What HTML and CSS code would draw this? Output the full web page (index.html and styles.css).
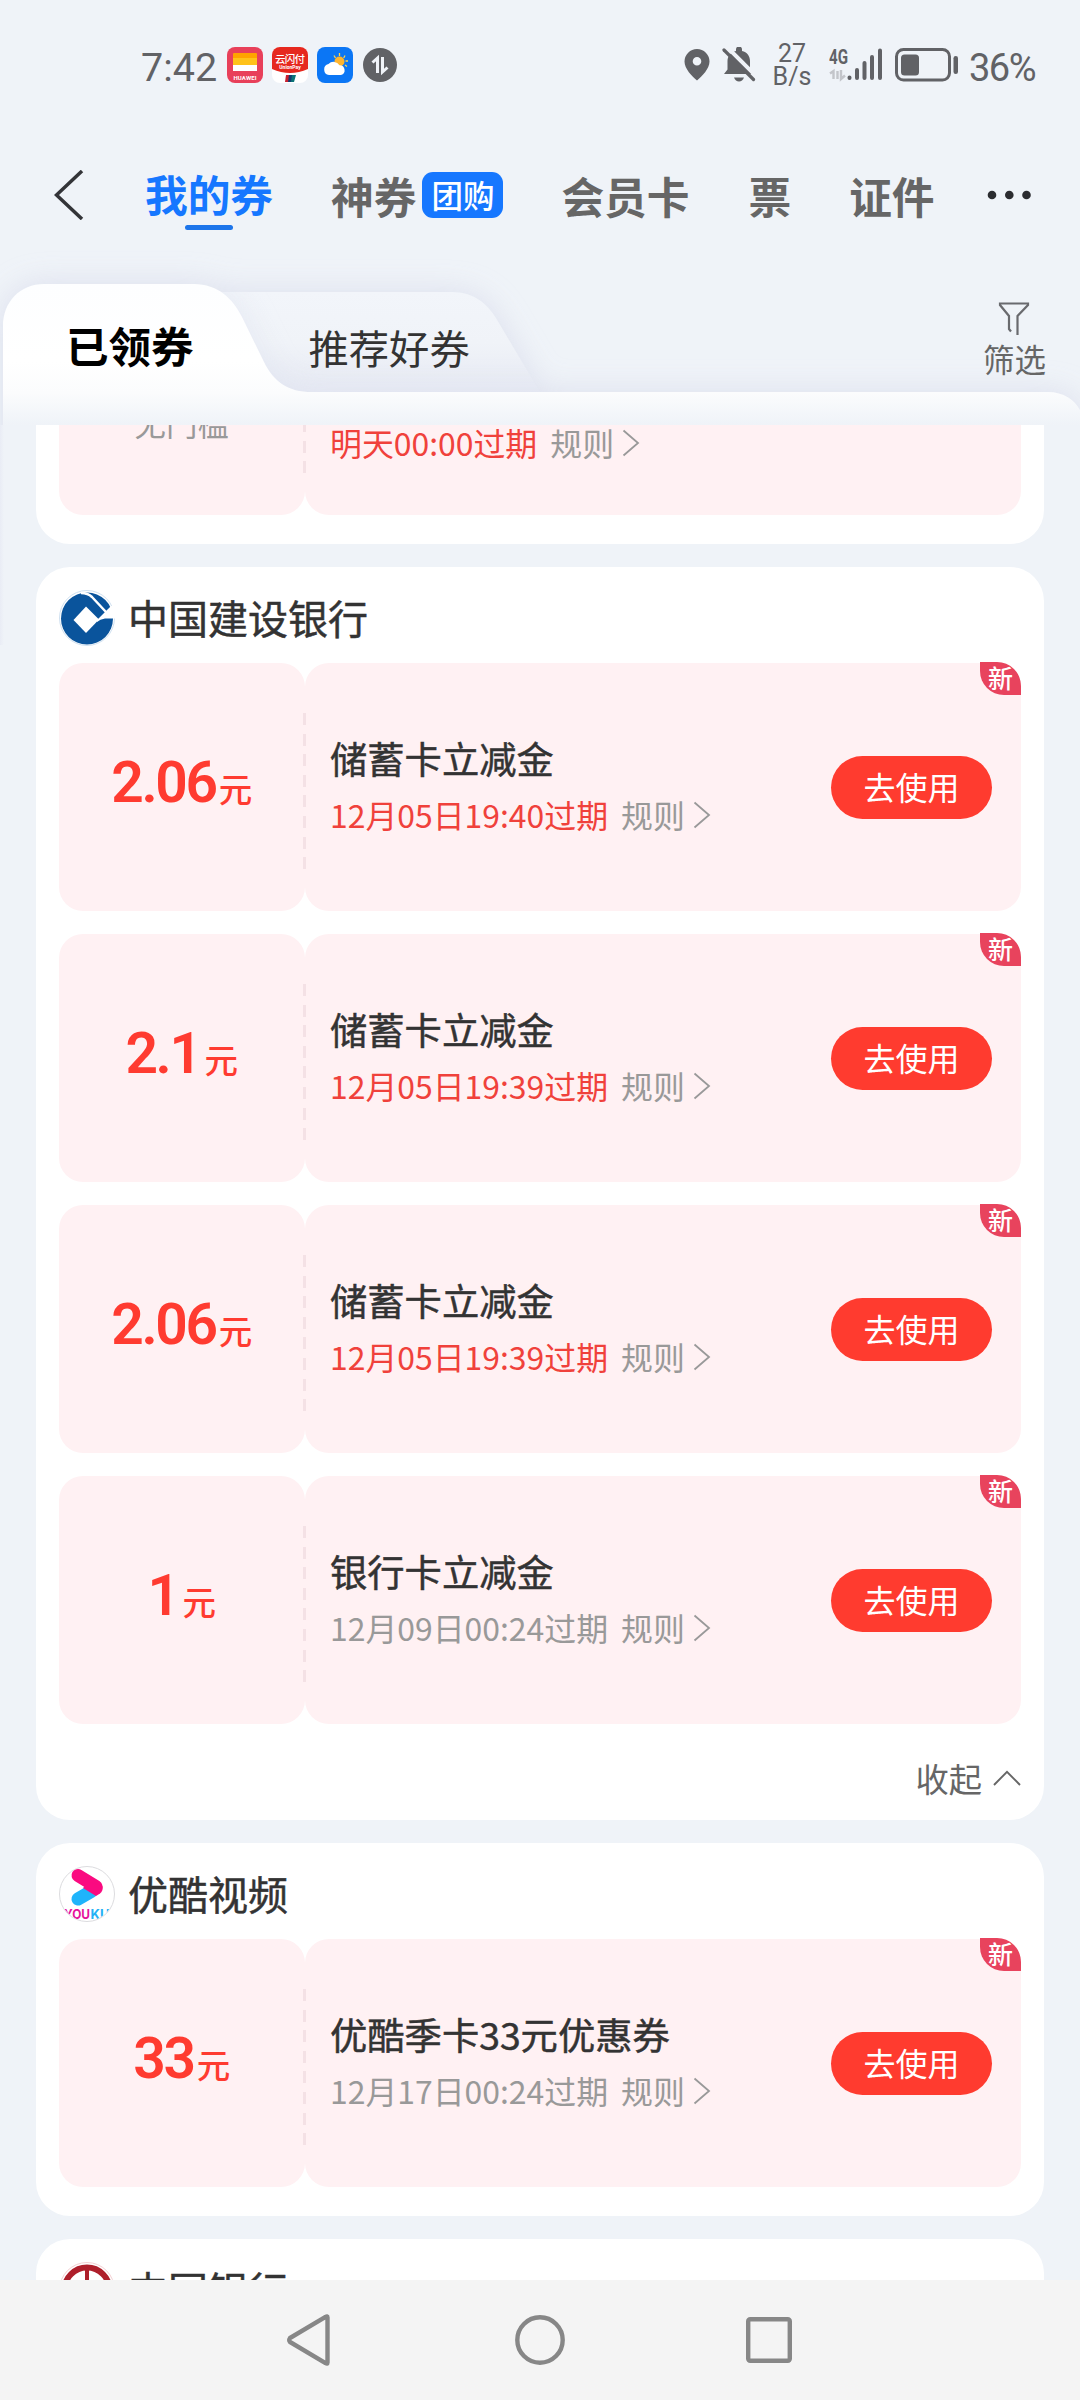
FILE: index.html
```html
<!DOCTYPE html>
<html lang="zh-CN">
<head>
<meta charset="utf-8">
<title>我的券</title>
<link rel="stylesheet" href="styles.css">
</head>
<body>
<svg class="defs" width="0" height="0" aria-hidden="true">
  <symbol id="arrow-right" viewBox="0 0 18 28"><path d="M1.500 1.500L16 14L1.500 26.500" fill="none" stroke="currentColor" stroke-width="1.800"/></symbol>
</svg>

<header class="status">
  <span class="status-time">7:42</span>
  <div class="status-apps">
    <svg width="36" height="36" viewBox="0 0 36 36">
      <rect width="36" height="36" rx="8" fill="#e8405a"/>
      <rect x="6" y="6" width="24" height="6" rx="1" fill="#ffa300"/><rect x="6" y="11" width="24" height="7" fill="#ffc21a"/><rect x="6" y="18" width="24" height="6" fill="#fff"/>
      <text x="18" y="32.500" text-anchor="middle" textLength="23" class="logo-text" font-size="6">HUAWEI</text>
    </svg>
    <svg width="36" height="36" viewBox="0 0 36 36">
      <rect width="36" height="36" rx="8" fill="#fff"/>
      <path d="M8 0H28A8 8 0 0 1 36 8V22Q18 30 0 22V8A8 8 0 0 1 8 0Z" fill="#e6281f"/>
      <text x="18" y="15.500" text-anchor="middle" textLength="30" class="logo-text logo-text-thin" font-size="10.500">云闪付</text>
      <text x="18" y="22" text-anchor="middle" class="logo-text" font-size="5">UnionPay</text>
      <path d="M14 28H18L17 35H13Z" fill="#c8202f"/><path d="M17 28H21L20 35H16Z" fill="#123a70"/><path d="M20 28H24L22 35H19Z" fill="#0b7377"/>
    </svg>
    <svg width="36" height="36" viewBox="0 0 36 36">
      <rect width="36" height="36" rx="8" fill="#0b76f5"/>
      <g stroke="#ffd34d" stroke-width="1.300"><path d="M22.500 6V9M17 8.500L18.500 11M28 8.500L26.700 11M31 14H28.500M30 19.500L28 18"/></g>
      <circle cx="22.500" cy="14.500" r="5" fill="#ffb52e"/>
      <path d="M12 28A5.600 5.600 0 0 1 11.500 17A7 7 0 0 1 22.500 18.200A5 5 0 0 1 24 28Z" fill="#fff"/>
    </svg>
    <svg width="36" height="36" viewBox="0 0 36 36">
      <circle cx="18" cy="18" r="17" fill="#616266"/>
      <path d="M15.500 26V11L10.500 15.500M20.500 10V25L25.500 20.500" fill="none" stroke="#f0f3f8" stroke-width="3"/>
    </svg>
  </div>
  <div class="status-right">
    <svg width="26" height="32" viewBox="0 0 26 32"><path fill-rule="evenodd" d="M13 0A12.500 12.500 0 0 1 25.500 12.500C25.500 20 18 27 13 31.500C8 27 .5 20 .5 12.500A12.500 12.500 0 0 1 13 0ZM13 8A4.300 4.300 0 1 0 13 16.600A4.300 4.300 0 0 0 13 8Z" fill="#616266"/></svg>
    <svg class="icon-bell" width="34" height="36" viewBox="0 0 34 36">
      <path d="M2 27H31L28 22.500V14C28 9 25 5 20 4V2.500A3 3 0 0 0 14 2.500V4C9 5 5.500 9 5.500 14V22.500Z" fill="#616266"/>
      <path d="M12 30.500H22Q20.500 34.500 17 34.500T12 30.500Z" fill="#616266"/>
      <path d="M5 0L36 31" stroke="#f0f3f8" stroke-width="4"/>
      <path d="M2 3L31.500 32.500" stroke="#616266" stroke-width="3.200" stroke-linecap="round"/>
    </svg>
    <span class="status-speed"><span>27</span><span>B/s</span></span>
    <svg class="icon-signal" width="54" height="36" viewBox="0 0 54 36">
      <text x="0" y="16.500" font-size="20" textLength="19" lengthAdjust="spacingAndGlyphs" class="net-text">4G</text>
      <path d="M4.500 32V24L1 26.500M8.500 24V32M12 23V32L16 28.500" stroke="#c3c5ca" stroke-width="2.400" fill="none"/>
      <g stroke="#616266" stroke-width="4" stroke-linecap="round"><path d="M20.500 30.500V31M28 23V31M35.500 16V31M43 10V31M51 3.500V31"/></g>
    </svg>
    <svg class="icon-battery" width="64" height="34" viewBox="0 0 64 34">
      <rect x="1.500" y="1.500" width="53" height="30.500" rx="7" fill="none" stroke="#616266" stroke-width="3"/>
      <rect x="6" y="6.500" width="18" height="21" rx="3.500" fill="#616266"/><rect x="58.500" y="8" width="4.500" height="18" rx="2.200" fill="#616266"/>
    </svg>
    <span class="status-pct">36%</span>
  </div>
</header>

<nav class="topbar">
  <svg class="back" width="30" height="50" viewBox="0 0 30 50"><path d="M28 1L2.500 25L28 49" fill="none" stroke="#333438" stroke-width="3.500"/></svg>
  <a class="top-tab top-tab-active">我的券</a>
  <a class="top-tab top-tab-deal">神券<span class="deal-badge">团购</span></a>
  <a class="top-tab top-tab-member">会员卡</a>
  <a class="top-tab top-tab-ticket">票</a>
  <a class="top-tab top-tab-id">证件</a>
  <svg class="more" width="44" height="10" viewBox="0 0 44 10" fill="#2b2c30"><circle cx="5" cy="5" r="4.300"/><circle cx="22.300" cy="5" r="4.300"/><circle cx="39.500" cy="5" r="4.300"/></svg>
</nav>

<section class="subtabs">
  <svg class="subtabs-shape" width="1080" height="405" viewBox="0 240 1080 405">
    <defs>
      <linearGradient id="g-active" gradientUnits="userSpaceOnUse" x1="0" y1="284" x2="0" y2="425"><stop offset="0" stop-color="#fdfeff"/><stop offset=".55" stop-color="#fff"/><stop offset=".77" stop-color="#fbfcfd"/><stop offset="1" stop-color="#eff3f8"/></linearGradient>
      <linearGradient id="g-idle" x1="0" y1="0" x2="0" y2="1"><stop offset="0" stop-color="#f2f5fa"/><stop offset=".5" stop-color="#f0f3f8"/><stop offset="1" stop-color="#e6e9f3"/></linearGradient>
      <filter id="glow" filterUnits="userSpaceOnUse" x="-60" y="230" width="1200" height="460"><feGaussianBlur stdDeviation="15"/></filter>
      <clipPath id="clip-idle"><path d="M150 292H452C474 292 487 304 496 318L541 394H150Z"/></clipPath>
      <path id="shape-active" d="M3 660V326C3 302 20 284 44 284H194C218 284 233 299 242 317L264 362C274 382 288 392 312 392H1048C1066 392 1077 402 1082 414V660Z"/>
      <path id="shape-idle" d="M150 292H452C474 292 487 304 496 318L541 394H150Z"/>
    </defs>
    <g filter="url(#glow)" fill="#d9dceb" opacity=".85"><use href="#shape-idle"/><use href="#shape-active"/></g>
    <use href="#shape-idle" fill="url(#g-idle)"/>
    <g clip-path="url(#clip-idle)"><use href="#shape-active" fill="#dfe3f0" opacity=".7" filter="url(#glow)"/></g>
    <use href="#shape-active" fill="url(#g-active)"/>
  </svg>
  <a class="subtab subtab-active">已领券</a>
  <a class="subtab subtab-idle">推荐好券</a>
  <a class="filter">
    <svg width="32" height="34" viewBox="0 0 32 34"><path d="M13 29.500L11 27V14L2 3V1.500H30V3L19.500 14V33" fill="none" stroke="#696a6e" stroke-width="2.200"/></svg>
    <span>筛选</span>
  </a>
</section>

<main class="list">
  <section class="card card-first">
    <article class="coupon">
      <div class="coupon-amount"><span class="threshold">无门槛</span></div>
      <div class="coupon-body">
        <div class="coupon-info"><p class="coupon-meta"><span class="soon">明天00:00过期</span><span class="rule">规则</span><svg class="chev"><use href="#arrow-right"/></svg></p></div>
      </div>
    </article>
  </section>

  <section class="card">
    <h2 class="brand">
      <svg width="56" height="56" viewBox="0 0 56 56"><circle cx="28" cy="28" r="27.500" fill="#fff" stroke="#cfe0f0"/><circle cx="28" cy="28.500" r="26" fill="#0a549c"/><path d="M27 16.500L40 29.500L27 43L14.500 30Z" fill="#fff"/><path d="M38 30L49 19L52 16H57V28.500H46Q41 29 38 32Z" fill="#fff"/><path d="M22 3Q29 3 33 7L47 22" stroke="#fff" stroke-width="2.500" fill="none"/></svg>
      <span>中国建设银行</span>
    </h2>
    <article class="coupon">
      <div class="coupon-amount"><b>2.06</b><i>元</i></div>
      <div class="coupon-body">
        <div class="coupon-info"><h3>储蓄卡立减金</h3><p class="coupon-meta"><span class="soon">12月05日19:40过期</span><span class="rule">规则</span><svg class="chev"><use href="#arrow-right"/></svg></p></div>
        <button class="use">去使用</button>
      </div>
      <span class="new">新</span>
    </article>
    <article class="coupon">
      <div class="coupon-amount"><b>2.1</b><i class="spaced">元</i></div>
      <div class="coupon-body">
        <div class="coupon-info"><h3>储蓄卡立减金</h3><p class="coupon-meta"><span class="soon">12月05日19:39过期</span><span class="rule">规则</span><svg class="chev"><use href="#arrow-right"/></svg></p></div>
        <button class="use">去使用</button>
      </div>
      <span class="new">新</span>
    </article>
    <article class="coupon">
      <div class="coupon-amount"><b>2.06</b><i>元</i></div>
      <div class="coupon-body">
        <div class="coupon-info"><h3>储蓄卡立减金</h3><p class="coupon-meta"><span class="soon">12月05日19:39过期</span><span class="rule">规则</span><svg class="chev"><use href="#arrow-right"/></svg></p></div>
        <button class="use">去使用</button>
      </div>
      <span class="new">新</span>
    </article>
    <article class="coupon">
      <div class="coupon-amount"><b>1</b><i class="spaced">元</i></div>
      <div class="coupon-body">
        <div class="coupon-info"><h3>银行卡立减金</h3><p class="coupon-meta"><span>12月09日00:24过期</span><span class="rule">规则</span><svg class="chev"><use href="#arrow-right"/></svg></p></div>
        <button class="use">去使用</button>
      </div>
      <span class="new">新</span>
    </article>
    <a class="collapse">收起<svg width="28" height="16" viewBox="0 0 28 16"><path d="M1 15L14 1.800L27 15" fill="none" stroke="#666" stroke-width="1.900"/></svg></a>
  </section>

  <section class="card">
    <h2 class="brand">
      <svg width="56" height="56" viewBox="0 0 56 56">
        <defs><clipPath id="round"><circle cx="28" cy="28" r="27"/></clipPath></defs>
        <circle cx="28" cy="28" r="27.500" fill="#fff" stroke="#dcdcdf"/>
        <path d="M19 33L32 25.500" stroke="#1fb4fb" stroke-width="13" stroke-linecap="round"/>
        <path d="M19 9.500L37 20.500" stroke="#fa0a80" stroke-width="13" stroke-linecap="round"/>
        <path d="M30 16L43.500 20Q44.500 25 41 27.500L37 30L24 22Z" fill="#fa0a80"/>
        <g clip-path="url(#round)" font-size="13" class="youku-text"><text x="5" y="53" fill="#e6129b" textLength="26" lengthAdjust="spacingAndGlyphs">YOU</text><text x="31.500" y="53" fill="#23b1f5" textLength="19" lengthAdjust="spacingAndGlyphs">KU</text></g>
      </svg>
      <span>优酷视频</span>
    </h2>
    <article class="coupon">
      <div class="coupon-amount"><b>33</b><i>元</i></div>
      <div class="coupon-body">
        <div class="coupon-info"><h3>优酷季卡33元优惠券</h3><p class="coupon-meta"><span>12月17日00:24过期</span><span class="rule">规则</span><svg class="chev"><use href="#arrow-right"/></svg></p></div>
        <button class="use">去使用</button>
      </div>
      <span class="new">新</span>
    </article>
  </section>

  <section class="card card-last">
    <h2 class="brand">
      <svg width="56" height="56" viewBox="0 0 56 56"><circle cx="28" cy="28" r="27.500" fill="#fff" stroke="#f3cfd2"/><circle cx="28" cy="28" r="22.500" fill="none" stroke="#ae1f2b" stroke-width="6"/><path d="M28 5V51" stroke="#ae1f2b" stroke-width="4"/><rect x="18" y="20" width="20" height="16" rx="3" fill="#fff" stroke="#ae1f2b" stroke-width="4"/></svg>
      <span>中国银行</span>
    </h2>
  </section>
</main>

<footer class="sysnav">
  <svg width="46" height="52" viewBox="0 0 46 52"><path d="M41.500 3.500V48.500Q41.500 50.500 39.500 49L4 28Q2.500 26 4 24L39.500 3Q41.500 1.500 41.500 3.500Z"/></svg>
  <svg width="50" height="50" viewBox="0 0 50 50"><circle cx="25" cy="25" r="22.700"/></svg>
  <svg width="46" height="46" viewBox="0 0 46 46"><rect x="2.200" y="2.200" width="41.600" height="41.600" rx="2"/></svg>
</footer>
</body>
</html>
```

FILE: styles.css
```css
* { box-sizing: border-box; }

body {
  margin: 0;
  width: 1080px;
  height: 2400px;
  overflow: hidden;
  display: flex;
  flex-direction: column;
  background: #eff3f8;
  color: #333;
  font-family: "Noto Sans CJK SC", sans-serif;
}

svg { display: block; flex: none; }
.defs { position: absolute; }
h2, h3, p { margin: 0; font-weight: 500; }

/* System status bar */
.status {
  height: 130px;
  flex: none;
  display: flex;
  align-items: center;
  padding: 0 44px 0 141px;
  color: #616266;
  font-family: Roboto, "Noto Sans CJK SC", sans-serif;
}
.status-time { font-size: 39.500px; width: 86px; line-height: 40px; padding-top: 5px; }
.status-apps { display: flex; gap: 9px; }
.status-right { display: flex; align-items: center; margin-left: auto; }
.icon-bell { margin-left: 12px; }
.status-speed {
  display: flex;
  flex-direction: column;
  align-items: center;
  width: 38px;
  margin-left: 17px;
  font-size: 25px;
  line-height: 23px;
}
.icon-signal { margin-left: 18px; }
.icon-battery { margin-left: 12px; }
.status-pct { width: 67px; margin-left: 10px; font-size: 38px; line-height: 40px; letter-spacing: -1.500px; padding-top: 5px; }
.logo-text { fill: #fff; font-family: Roboto, "Noto Sans CJK SC", sans-serif; font-weight: 700; }
.logo-text-thin { font-weight: 500; }
.net-text { fill: #616266; font-family: Roboto, sans-serif; font-weight: 700; }
.youku-text { font-family: Inter, sans-serif; font-weight: 700; }

/* Category tabs */
.topbar {
  height: 130px;
  flex: none;
  display: flex;
  align-items: center;
  padding-left: 54px;
  color: #666;
}
.back { margin-right: 61px; }
.top-tab {
  display: flex;
  align-items: center;
  height: 130px;
  font-size: 42.700px;
  font-weight: 700;
  line-height: 60px;
  padding-bottom: 1px;
}
.top-tab-active {
  color: #1677ff;
  flex-direction: column;
  padding: 33px 0 0;
}
.top-tab-active::after {
  content: "";
  width: 48px;
  height: 5px;
  margin-top: 2px;
  border-radius: 3px;
  background: #1d75ea;
}
.top-tab-deal { margin-left: 58px; }
.deal-badge {
  width: 81px;
  height: 46px;
  margin-left: 6px;
  border-radius: 11px;
  background: #1677ff;
  color: #fff;
  font-size: 31.500px;
  font-weight: 500;
  line-height: 44px;
  text-align: center;
}
.top-tab-member { margin-left: 58px; }
.top-tab-ticket { margin-left: 59px; }
.top-tab-id { margin-left: 58px; }
.more { margin-left: 52px; }

/* Folder-shaped tabs */
.subtabs {
  position: relative;
  height: 165px;
  flex: none;
  display: flex;
  padding-left: 66px;
}
.subtabs-shape { position: absolute; left: 0; top: -20px; z-index: -1; }
.subtab { line-height: 60px; }
.subtab-active { padding-top: 55px; color: #000; font-size: 42.500px; font-weight: 700; }
.subtab-idle { padding-top: 57px; margin-left: 115px; font-size: 40.300px; }
.filter {
  display: flex;
  flex-direction: column;
  align-items: center;
  margin: 42px 34px 0 auto;
  color: #666;
  font-size: 31.500px;
  line-height: 44px;
}

/* Coupon list */
.list {
  height: 1855px;
  flex: none;
  overflow: hidden;
  display: flex;
  flex-direction: column;
  gap: 23px;
  padding: 0 36px;
  background: linear-gradient(90deg, #e9ecf5, #eff3f8 4px) no-repeat 0 0 / 100% 220px;
  background-color: #eff3f8;
}
.card {
  flex: none;
  display: flex;
  flex-direction: column;
  gap: 23px;
  padding: 0 23px 29px;
  border-radius: 34px;
  background: #fff;
}
.card-first {
  height: 119px;
  justify-content: flex-end;
  overflow: hidden;
  border-radius: 0 0 34px 34px;
}
.card-last { height: 120px; }
.brand {
  display: flex;
  align-items: center;
  gap: 13px;
  height: 96px;
  margin-bottom: -23px;
  padding-top: 6px;
  font-size: 40px;
  font-weight: 400;
}
.brand span { line-height: 56px; padding-bottom: 3px; -webkit-text-stroke: .5px #333; }
.coupon {
  position: relative;
  display: flex;
  height: 248px;
  flex: none;
}
.coupon::after {
  content: "";
  position: absolute;
  left: 244px;
  top: 50px;
  width: 3px;
  height: 156px;
  background: repeating-linear-gradient(#f4e1e5 0 12px, transparent 12px 20.600px);
}
.coupon-amount, .coupon-body { border-radius: 24px; background: #fff1f3; }
.coupon-amount {
  width: 245.500px;
  display: flex;
  align-items: baseline;
  justify-content: center;
  padding-top: 85px;
  color: #ff3b30;
}
.coupon-amount b {
  font-family: Roboto, sans-serif;
  font-size: 57px;
  font-weight: 600;
  line-height: 70px;
  letter-spacing: -2.400px;
}
.coupon-amount i { margin-left: 3px; font-size: 33.500px; font-style: normal; font-weight: 500; line-height: 50px; }
.coupon-amount .spaced { margin-left: 5px; }
.threshold { padding-top: 47px; color: #999; font-size: 31.500px; line-height: 46px; }
.coupon-body {
  flex: 1;
  display: flex;
  align-items: center;
  justify-content: space-between;
  padding: 0 29px 0 25.500px;
}
.coupon-info { padding-bottom: 3px; }
.coupon-info h3 { font-size: 37.300px; font-weight: 400; line-height: 54px; -webkit-text-stroke: .5px #333; }
.coupon-meta {
  display: flex;
  align-items: center;
  padding-top: 2px;
  color: #999;
  font-size: 31.900px;
  font-weight: 400;
  line-height: 54px;
}
.soon { color: #f0413b; }
.rule { margin-left: 13px; }
.chev { width: 18px; height: 28px; margin: 2px 0 0 8px; }
.card-first .coupon-meta { padding-top: 104px; }
.use {
  width: 161px;
  height: 63px;
  padding: 0 0 3px;
  border: 0;
  border-radius: 32px;
  background: #ff3b2f;
  color: #fff;
  font: 400 32px/60px "Noto Sans CJK SC", sans-serif;
}
.new {
  position: absolute;
  right: 0;
  top: -1px;
  width: 41px;
  height: 33px;
  border-radius: 0 24px 0 24px;
  background: #e8435d;
  color: #fff;
  font-size: 25px;
  font-weight: 500;
  line-height: 31px;
  text-align: center;
}
.collapse {
  display: flex;
  align-items: center;
  justify-content: flex-end;
  gap: 11px;
  height: 44px;
  margin-top: 9px;
  margin-bottom: -9px;
  color: #666;
  font-size: 33.300px;
  line-height: 44px;
}

/* System navigation */
.sysnav {
  height: 120px;
  flex: none;
  display: flex;
  align-items: center;
  padding-left: 286px;
  background: #f4f4f4;
  fill: none;
  stroke: #878787;
  stroke-width: 4.400;
}
.sysnav svg + svg { margin-left: 183px; }
.sysnav svg:last-child { margin-left: 181px; }
```
